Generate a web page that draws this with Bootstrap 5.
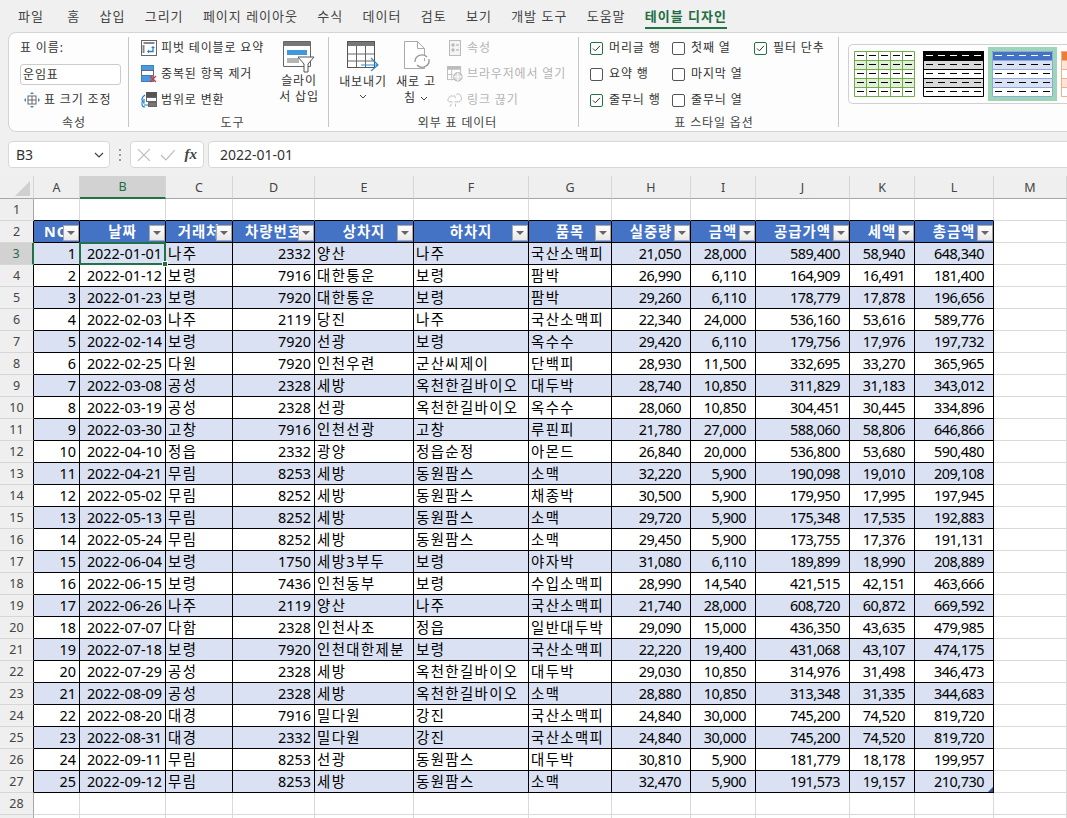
<!DOCTYPE html>
<html lang="ko">
<head>
  <meta charset="UTF-8" />
  <meta name="viewport" content="width=device-width, initial-scale=1" />
  <title>운임표 - Excel</title>
  <link href="https://cdn.jsdelivr.net/npm/bootstrap@5.3.0/dist/css/bootstrap.min.css" rel="stylesheet" />
  <style>
    body {
      margin: 0;
      height: 818px;
      overflow: hidden;
      background: #f0f0f0;
      color: #333;
      font-family: "Noto Sans", "Noto Sans CJK KR", sans-serif;
      font-size: 12px;
    }

    /* Tabs */
    .xl-tabs { height: 32px; padding-left: 18px; gap: 19.3px; font-size: 13px; letter-spacing: 1px; white-space: nowrap; }
    .xl-tabs span { line-height: 32px; color: #444; }
    .xl-tabs span:first-child { margin-right: 4px; }
    .xl-tabs .on { color: #1e6e43; font-weight: 700; position: relative; }
    .xl-tabs .on::after { content: ""; position: absolute; left: 0; right: 0; top: 27px; height: 2px; background: #217346; }

    /* Ribbon */
    .xl-ribbon {
      height: 100px;
      width: 1080px;
      margin-left: 8px;
      background: #fdfdfd;
      border: 1px solid #d4d4d4;
      border-radius: 8px;
      padding-top: 4px;
      letter-spacing: .85px;
      white-space: nowrap;
    }
    .xl-grp { height: 90px; border-right: 1px solid #c6c6c6; position: relative; flex: none; }
    .xl-grp-body { height: 78px; padding-top: 1px; }
    .xl-grp-label { height: 16px; line-height: 16px; text-align: center; color: #444; }
    .xl-g1 { width: 120px; padding-left: 11px; }
    .xl-g2 { width: 200px; padding: 0 4px 0 12px; }
    .xl-g3 { width: 250px; padding-left: 8px; }
    .xl-g4 { width: 260px; padding-left: 11px; }
    .xl-stack { display: flex; flex-direction: column; gap: 6px; }
    .xl-line { height: 20px; display: flex; align-items: center; gap: 4px; }
    .xl-off { color: #b4b4b4; }
    .xl-name { width: 101px; height: 21px; line-height: 19px; background: #fff; border: 1px solid #ccc; border-radius: 3px; padding-left: 2px; font-size: 12px; color: #333; }
    .xl-big { display: flex; flex-direction: column; align-items: center; text-align: center; line-height: 16px; padding-top: 3px; white-space: normal; }
    .xl-big svg { margin-bottom: 3px; flex: none; }
    .xl-slicer { width: 50px; }
    .xl-export { width: 52px; }
    .xl-refresh { width: 46px; }
    .xl-check { display: grid; grid-template-columns: 82px 82px 82px; row-gap: 6px; }
    .xl-check label { height: 20px; display: flex; align-items: center; gap: 6px; }
    .xl-check .form-check-input { width: 13px; height: 13px; margin: 0; border: 1px solid #555; border-radius: 2px; box-shadow: none; float: none; }
    .xl-check .form-check-input:checked {
      background-color: #fff;
      border-color: #217346;
      background-size: 9px 9px;
      background-image: url("data:image/svg+xml,%3csvg xmlns='http://www.w3.org/2000/svg' viewBox='0 0 9 9'%3e%3cpath d='M1 4.5l2.3 2.3L8 1.8' fill='none' stroke='%23333' stroke-width='1'/%3e%3c/svg%3e");
    }
    .xl-gallery { margin: 7px 0 0 9px; height: 60px; width: 240px; border: 1px solid #d0d0d0; border-right: 0; border-radius: 5px 0 0 5px; gap: 8px; padding-left: 5px; align-items: center; flex: none; }
    .xl-thumb { padding: 0; flex: none; line-height: 0; }
    .xl-thumb-on { background: #9fd5b7; padding: 4px; margin: 0 -4px; }

    /* Formula bar */
    .xl-fbar { height: 44px; padding: 9px 0 8px 8px; gap: 0; }
    .xl-box { height: 27px; background: #fff; border: 1px solid #d8d8d8; border-radius: 4px; flex: none; }
    .xl-namebox { width: 102px; padding: 0 5px 0 7px; font-size: 14px; color: #333; }
    .xl-dots { width: 20px; flex: none; }
    .xl-fx { width: 74px; gap: 9px; padding: 0 6px; }
    .xl-fx i { font-family: "Liberation Serif", serif; font-size: 15px; font-weight: 700; color: #444; }
    .xl-input { width: 880px; margin-left: 4px; padding-left: 11px; font-size: 14px; line-height: 25px; color: #333; }

    /* Sheet */
    .c-rh { width: 34px; } .c-a { width: 46px; } .c-b { width: 86px; } .c-c { width: 67px; } .c-d { width: 82px; }
    .c-e { width: 99px; } .c-f { width: 115px; } .c-g { width: 83px; } .c-h { width: 79px; } .c-i { width: 65px; }
    .c-j { width: 94px; } .c-k { width: 65px; } .c-l { width: 79px; } .c-m { width: 73px; }
    .xl-sheet.table { width: 1067px; table-layout: fixed; border-collapse: separate; border-spacing: 0; margin: 0; background: #fff; }
    .xl-sheet.table > :not(caption) > * > * {
      height: 22px;
      padding: 0 3px 0 2px;
      font-size: 14.4px;
      line-height: 21px;
      font-weight: 400;
      color: #000;
      vertical-align: middle;
      white-space: nowrap;
      overflow: hidden;
      background-color: #fff;
      box-shadow: none;
      border-width: 0 1px 1px 0;
      border-style: solid;
      border-color: #d9d9d9;
    }
    .xl-sheet.table > thead > tr > th {
      height: 22px;
      padding: 0;
      text-align: center;
      font-size: 12.5px;
      color: #444;
      background-color: #efefef;
      border-right-color: #d6d6d6;
      border-bottom-color: #a6a6a6;
    }
    .xl-sheet.table > thead > tr > th.cur { background-color: #d2d2d2; color: #1e6e43; border-bottom: 2px solid #217346; }
    .xl-sheet.table > tbody > tr > th.xl-rh {
      padding: 0;
      text-align: center;
      font-size: 12.5px;
      color: #444;
      background-color: #efefef;
      border-right-color: #a6a6a6;
      border-bottom-color: #d6d6d6;
    }
    .xl-sheet.table > tbody > tr > th.xl-rh.black { border-right-color: #000; }
    .xl-sheet.table > tbody > tr > th.xl-rh.cur { background-color: #d2d2d2; color: #1e6e43; border-right: 2px solid #217346; }
    .xl-sheet.table > tbody > tr > td.above { border-bottom-color: #000; }
    .xl-sheet.table > tbody > tr > td.cell { border-color: #000; text-align: right; }
    .xl-sheet.table > tbody > tr > td.cell.ko { text-align: left; letter-spacing: 1.4px; }
    .xl-sheet.table > tbody > tr > td.cell.acc { padding-right: 9px; letter-spacing: -.45px; }
    .xl-sheet.table > tbody > tr > td.stripe { background-color: #d9e1f2; }
    .xl-sheet.table > tbody > tr > td.head { background-color: #4472c4; color: #fff; font-weight: 700; text-align: center; letter-spacing: 1px; padding: 0; position: relative; }
    .xl-sheet.table > tbody > tr > td.pick, .xl-sheet.table > tbody > tr > td.last { position: relative; overflow: visible; }

    .xl-filter {
      position: absolute;
      right: 0;
      bottom: 1px;
      width: 16px;
      height: 16px;
      background: linear-gradient(#fff, #e8e8e8);
      border: 1px solid #a8a8a8;
      display: flex;
      align-items: center;
      justify-content: center;
    }
    .xl-filter::after { content: ""; border: 4px solid transparent; border-top: 4px solid #666; border-bottom: 0; }
    .xl-pick { position: absolute; left: -1px; top: -1px; right: -1px; bottom: -1px; border: 2px solid #217346; pointer-events: none; }
    .xl-pick::after { content: ""; position: absolute; right: -4px; bottom: -4px; background: #217346; border: 1px solid #fff; box-sizing: content-box; width: 4px; height: 4px; }
    .xl-corner { position: absolute; right: 0; bottom: 0; border-style: solid; border-width: 0 0 5px 5px; border-color: transparent transparent #2f5597 transparent; }
    .xl-tri { display: block; margin: 3px 0 0 15px; width: 0; height: 0; border-style: solid; border-width: 0 0 15px 15px; border-color: transparent transparent #d0d0d0 transparent; }
  </style>
</head>
<body>
  <!-- Tabs -->
  <div class="xl-tabs d-flex">
    <span>파일</span><span>홈</span><span>삽입</span><span>그리기</span><span>페이지 레이아웃</span><span>수식</span><span>데이터</span><span>검토</span><span>보기</span><span>개발 도구</span><span>도움말</span><span class="on">테이블 디자인</span>
  </div>

  <!-- Ribbon -->
  <div class="xl-ribbon d-flex">
    <div class="xl-grp xl-g1">
      <div class="xl-grp-body xl-stack">
        <div class="xl-line">표 이름:</div>
        <div class="xl-line"><div class="xl-name">운임표</div></div>
        <div class="xl-line ps-1">
          <svg width="16" height="16" viewBox="0 0 16 16"><rect x="4" y="4" width="8" height="8" fill="#fff" stroke="#666"/><path d="M4 8h8M8 4v8" stroke="#666"/><path d="M8 0l-2 2h4zM8 16l-2-2h4zM0 8l2-2v4zM16 8l-2-2v4z" fill="#2b8ad6"/></svg>
          <span>표 크기 조정</span>
        </div>
      </div>
      <div class="xl-grp-label">속성</div>
    </div>

    <div class="xl-grp xl-g2">
      <div class="xl-grp-body d-flex">
        <div class="xl-stack">
          <div class="xl-line">
            <svg width="16" height="16" viewBox="0 0 16 16"><rect x=".5" y=".5" width="15" height="15" fill="#fff" stroke="#666"/><path d="M2.500 3h11M2.500 5v8" stroke="#888" stroke-width="2"/><path d="M12 7v4.500H7.500" fill="none" stroke="#1f7fd0" stroke-width="1.300"/><path d="M12 6l-2 2h4zM6 11.500l2-2v4z" fill="#1f7fd0"/></svg>
            <span>피벗 테이블로 요약</span>
          </div>
          <div class="xl-line">
            <svg width="16" height="18" viewBox="0 0 16 18"><rect x=".5" y=".5" width="12" height="5" fill="#4a9adf" stroke="#3b7fbd"/><rect x=".5" y="5.500" width="12" height="5" fill="#fff" stroke="#666"/><rect x=".5" y="10.500" width="12" height="6" fill="#4a9adf" stroke="#3b7fbd"/><path d="M9 11l6 6M15 11l-6 6" stroke="#e0352b" stroke-width="1.400"/></svg>
            <span>중복된 항목 제거</span>
          </div>
          <div class="xl-line">
            <svg width="16" height="16" viewBox="0 0 16 16"><rect x="5.500" y=".5" width="10" height="5" fill="#555" stroke="#555"/><rect x="5.500" y="5.500" width="10" height="4" fill="#fff" stroke="#666"/><rect x="7.500" y="10.500" width="8" height="4" fill="#777" stroke="#666"/><path d="M4 3C1 5 0 8 2 10M3 7v4H0M4 15c-2 0-3-1-3-3M7 13H3" fill="none" stroke="#1f7fd0" stroke-width="1.200"/></svg>
            <span>범위로 변환</span>
          </div>
        </div>
        <div class="xl-big xl-slicer ms-auto">
          <svg class="mb-0" width="32" height="32" viewBox="0 0 32 32"><path d="M.5 .5h27v25H.5z" fill="#fff" stroke="#666"/><rect x="1" y="1" width="26" height="4" fill="#777"/><rect x="4" y="9" width="20" height="5" fill="#3f97dc"/><rect x="4" y="17" width="12" height="5" fill="#b5b5b5"/><path d="M15 16h16l-6 7v8h-4v-8z" fill="#fff" stroke="#555"/></svg>
          <span>슬라이 서 삽입</span>
        </div>
      </div>
      <div class="xl-grp-label">도구</div>
    </div>

    <div class="xl-grp xl-g3">
      <div class="xl-grp-body d-flex">
        <div class="xl-big xl-export">
          <svg width="32" height="30" viewBox="0 0 32 30"><rect x=".5" y=".5" width="27" height="26" fill="#fff" stroke="#555"/><rect x="1" y="1" width="26" height="4" fill="#777"/><path d="M9.500 5v21M18.500 5v21M1 13h26M1 20h26" stroke="#666"/><path d="M14 24h16M24 17l7 7-7 6" fill="none" stroke="#2b8ad6" stroke-width="1.200"/></svg>
          <span>내보내기</span>
          <svg class="mt-1" width="8" height="6" viewBox="0 0 8 6"><path d="M1 1l3 3 3-3" fill="none" stroke="#444"/></svg>
        </div>
        <div class="xl-big xl-refresh ms-1">
          <svg width="32" height="30" viewBox="0 0 32 30"><path d="M4.500 .5h13l7 7v20h-20z" fill="#fff" stroke="#aaa"/><path d="M17.500 .5v7h7" fill="none" stroke="#aaa"/><path d="M15 21a7 7 0 0 1 12-5M29 18a7 7 0 0 1-12 6" fill="#fff" stroke="#999" stroke-width="1.300"/></svg>
          <span>새로 고 침 <svg width="8" height="6" viewBox="0 0 8 6" class="m-0 d-inline align-baseline"><path d="M1 1l3 3 3-3" fill="none" stroke="#444"/></svg></span>
        </div>
        <div class="xl-stack ms-2 xl-off">
          <div class="xl-line">
            <svg width="16" height="16" viewBox="0 0 16 16"><rect x="2.500" y=".5" width="11" height="15" fill="#f4f4f4" stroke="#bbb"/><path d="M5 4h2v2H5zM5 9h2v2H5zM9 5h3M9 10h3" stroke="#aaa" fill="none"/></svg>
            <span>속성</span>
          </div>
          <div class="xl-line">
            <svg width="16" height="16" viewBox="0 0 17 17"><rect x=".5" y=".5" width="14" height="14" fill="#fff" stroke="#bbb"/><rect x="1" y="1" width="13" height="3" fill="#bbb"/><path d="M5 4v10M1 9h5" stroke="#bbb"/><circle cx="11.500" cy="11.500" r="4.500" fill="#ddd" stroke="#aaa"/><path d="M7 11.500h9M11.500 7v9" stroke="#fff"/></svg>
            <span>브라우저에서 열기</span>
          </div>
          <div class="xl-line">
            <svg width="16" height="16" viewBox="0 0 17 16"><path d="M7 4C5 3 2 4 2 6c-2 1-1 4 1 4h3M10 2c2-1 5 0 5 3 1 2 0 5-3 5H8" fill="none" stroke="#bbb"/><path d="M8 3l1 3M5 12l-2 3M9 12v3" stroke="#bbb"/></svg>
            <span>링크 끊기</span>
          </div>
        </div>
      </div>
      <div class="xl-grp-label">외부 표 데이터</div>
    </div>

    <div class="xl-grp xl-g4">
      <div class="xl-grp-body">
        <div class="xl-check">
          <label class="form-check-label"><input class="form-check-input" type="checkbox" checked />머리글 행</label>
          <label class="form-check-label"><input class="form-check-input" type="checkbox" />첫째 열</label>
          <label class="form-check-label"><input class="form-check-input" type="checkbox" checked />필터 단추</label>
          <label class="form-check-label"><input class="form-check-input" type="checkbox" />요약 행</label>
          <label class="form-check-label"><input class="form-check-input" type="checkbox" />마지막 열</label>
          <span></span>
          <label class="form-check-label"><input class="form-check-input" type="checkbox" checked />줄무늬 행</label>
          <label class="form-check-label"><input class="form-check-input" type="checkbox" />줄무늬 열</label>
        </div>
      </div>
      <div class="xl-grp-label">표 스타일 옵션</div>
    </div>

    <div class="xl-gallery d-flex overflow-hidden">
      <div class="xl-thumb">
        <svg width="61" height="46" viewBox="0 0 61 46">
          <rect width="61" height="46" fill="#fff"/>
          <path d="M0 9.500h61v9H0zM0 27.500h61v9H0z" fill="#e2efda"/>
          <path d="M.5 .5h60v45H.5zM.5 9.500h60M.5 18.500h60M.5 27.500h60M.5 36.500h60M12.500 0v46M24.500 0v46M36.500 0v46M48.500 0v46" fill="none" stroke="#70ad47"/>
          <path d="M3 4.500h55M3 13.500h55M3 22.500h55M3 31.500h55M3 40.500h55" stroke="#000" stroke-dasharray="7 5"/>
        </svg>
      </div>
      <div class="xl-thumb">
        <svg width="61" height="46" viewBox="0 0 61 46">
          <rect width="61" height="46" fill="#fff"/>
          <rect width="61" height="9.500" fill="#000"/>
          <path d="M0 9.500h61v9H0zM0 27.500h61v9H0z" fill="#d9d9d9"/>
          <path d="M.5 .5h60v45H.5zM.5 9.500h60M.5 18.500h60M.5 27.500h60M.5 36.500h60" fill="none" stroke="#000"/>
          <path d="M3 4.500h55" stroke="#fff" stroke-dasharray="7 5"/>
          <path d="M3 13.500h55M3 22.500h55M3 31.500h55M3 40.500h55" stroke="#000" stroke-dasharray="7 5"/>
        </svg>
      </div>
      <div class="xl-thumb xl-thumb-on">
        <svg width="61" height="46" viewBox="0 0 61 46">
          <rect width="61" height="46" fill="#fff"/>
          <rect width="61" height="9.500" fill="#4472c4"/>
          <path d="M0 9.500h61v9H0zM0 27.500h61v9H0z" fill="#d9e1f2"/>
          <path d="M.5 .5h60v45H.5zM.5 9.500h60M.5 18.500h60M.5 27.500h60M.5 36.500h60" fill="none" stroke="#8ea9db"/>
          <path d="M3 4.500h55" stroke="#fff" stroke-dasharray="7 5"/>
          <path d="M3 13.500h55M3 22.500h55M3 31.500h55M3 40.500h55" stroke="#000" stroke-dasharray="7 5"/>
        </svg>
      </div>
      <div class="xl-thumb">
        <svg width="61" height="46" viewBox="0 0 61 46">
          <rect width="61" height="46" fill="#fff"/>
          <rect width="61" height="9.500" fill="#ed7d31"/>
          <path d="M0 9.500h61v9H0zM0 27.500h61v9H0z" fill="#fce4d6"/>
          <path d="M.5 .5h60v45H.5zM.5 9.500h60M.5 18.500h60M.5 27.500h60M.5 36.500h60" fill="none" stroke="#f4b084"/>
        </svg>
      </div>
    </div>
  </div>

  <!-- Formula bar -->
  <div class="xl-fbar d-flex">
    <div class="xl-box xl-namebox d-flex align-items-center justify-content-between">
      <span>B3</span>
      <svg width="10" height="6" viewBox="0 0 10 6"><path d="M1 1l4 4 4-4" fill="none" stroke="#444" stroke-width="1.200"/></svg>
    </div>
    <div class="xl-dots d-flex align-items-center justify-content-center">
      <svg width="2" height="12" viewBox="0 0 2 12"><path d="M0 1h2M0 6h2M0 11h2" stroke="#999" stroke-width="2"/></svg>
    </div>
    <div class="xl-box xl-fx d-flex align-items-center">
      <svg width="14" height="14" viewBox="0 0 14 14"><path d="M1 1l12 12M13 1L1 13" stroke="#bbb" stroke-width="1.200"/></svg>
      <svg width="16" height="12" viewBox="0 0 16 12"><path d="M1 6l5 5L15 1" fill="none" stroke="#bbb" stroke-width="1.200"/></svg>
      <i>fx</i>
    </div>
    <div class="xl-box xl-input">2022-01-01</div>
  </div>

  <!-- Sheet -->
  <table class="table xl-sheet">
    <colgroup>
      <col class="c-rh" /><col class="c-a" /><col class="c-b" /><col class="c-c" /><col class="c-d" /><col class="c-e" /><col class="c-f" /><col class="c-g" /><col class="c-h" /><col class="c-i" /><col class="c-j" /><col class="c-k" /><col class="c-l" /><col class="c-m" />
    </colgroup>
    <thead>
      <tr>
        <th><span class="xl-tri"></span></th>
        <th>A</th><th class="cur">B</th><th>C</th><th>D</th><th>E</th><th>F</th><th>G</th><th>H</th><th>I</th><th>J</th><th>K</th><th>L</th><th>M</th>
      </tr>
    </thead>
    <tbody id="sheetBody"></tbody>
  </table>

  <script src="https://cdn.jsdelivr.net/npm/bootstrap@5.3.0/dist/js/bootstrap.bundle.min.js"></script>
  <script>
    const heads = ["NO", "날짜", "거래처", "차량번호", "상차지", "하차지", "품목", "실중량", "금액", "공급가액", "세액", "총금액"];
    const rows = [
      ["2022-01-01", "나주", "2332", "양산", "나주", "국산소맥피", "21,050", "28,000", "589,400", "58,940", "648,340"],
      ["2022-01-12", "보령", "7916", "대한통운", "보령", "팜박", "26,990", "6,110", "164,909", "16,491", "181,400"],
      ["2022-01-23", "보령", "7920", "대한통운", "보령", "팜박", "29,260", "6,110", "178,779", "17,878", "196,656"],
      ["2022-02-03", "나주", "2119", "당진", "나주", "국산소맥피", "22,340", "24,000", "536,160", "53,616", "589,776"],
      ["2022-02-14", "보령", "7920", "선광", "보령", "옥수수", "29,420", "6,110", "179,756", "17,976", "197,732"],
      ["2022-02-25", "다원", "7920", "인천우련", "군산씨제이", "단백피", "28,930", "11,500", "332,695", "33,270", "365,965"],
      ["2022-03-08", "공성", "2328", "세방", "옥천한길바이오", "대두박", "28,740", "10,850", "311,829", "31,183", "343,012"],
      ["2022-03-19", "공성", "2328", "선광", "옥천한길바이오", "옥수수", "28,060", "10,850", "304,451", "30,445", "334,896"],
      ["2022-03-30", "고창", "7916", "인천선광", "고창", "루핀피", "21,780", "27,000", "588,060", "58,806", "646,866"],
      ["2022-04-10", "정읍", "2332", "광양", "정읍순정", "아몬드", "26,840", "20,000", "536,800", "53,680", "590,480"],
      ["2022-04-21", "무림", "8253", "세방", "동원팜스", "소맥", "32,220", "5,900", "190,098", "19,010", "209,108"],
      ["2022-05-02", "무림", "8252", "세방", "동원팜스", "채종박", "30,500", "5,900", "179,950", "17,995", "197,945"],
      ["2022-05-13", "무림", "8252", "세방", "동원팜스", "소맥", "29,720", "5,900", "175,348", "17,535", "192,883"],
      ["2022-05-24", "무림", "8252", "세방", "동원팜스", "소맥", "29,450", "5,900", "173,755", "17,376", "191,131"],
      ["2022-06-04", "보령", "1750", "세방3부두", "보령", "야자박", "31,080", "6,110", "189,899", "18,990", "208,889"],
      ["2022-06-15", "보령", "7436", "인천동부", "보령", "수입소맥피", "28,990", "14,540", "421,515", "42,151", "463,666"],
      ["2022-06-26", "나주", "2119", "양산", "나주", "국산소맥피", "21,740", "28,000", "608,720", "60,872", "669,592"],
      ["2022-07-07", "다함", "2328", "인천사조", "정읍", "일반대두박", "29,090", "15,000", "436,350", "43,635", "479,985"],
      ["2022-07-18", "보령", "7920", "인천대한제분", "보령", "국산소맥피", "22,220", "19,400", "431,068", "43,107", "474,175"],
      ["2022-07-29", "공성", "2328", "세방", "옥천한길바이오", "대두박", "29,030", "10,850", "314,976", "31,498", "346,473"],
      ["2022-08-09", "공성", "2328", "세방", "옥천한길바이오", "소맥", "28,880", "10,850", "313,348", "31,335", "344,683"],
      ["2022-08-20", "대경", "7916", "밀다원", "강진", "국산소맥피", "24,840", "30,000", "745,200", "74,520", "819,720"],
      ["2022-08-31", "대경", "2332", "밀다원", "강진", "국산소맥피", "24,840", "30,000", "745,200", "74,520", "819,720"],
      ["2022-09-11", "무림", "8253", "선광", "동원팜스", "대두박", "30,810", "5,900", "181,779", "18,178", "199,957"],
      ["2022-09-12", "무림", "8253", "세방", "동원팜스", "소맥", "32,470", "5,900", "191,573", "19,157", "210,730"]
    ];
    const koCols = [2, 4, 5, 6]; // hangul columns are left aligned (index in the row, NO = 0)

    let html = "<tr><th class='xl-rh'>1</th>";
    for (let c = 0; c < 12; c++) html += "<td class='above'></td>";
    html += "<td></td></tr><tr><th class='xl-rh black'>2</th>";
    heads.forEach((h) => {
      html += "<td class='cell head'>" + h + "<span class='xl-filter'></span></td>";
    });
    html += "<td></td></tr>";

    rows.forEach((row, r) => {
      const cells = [String(r + 1)].concat(row);
      html += "<tr><th class='xl-rh black" + (r === 0 ? " cur" : "") + "'>" + (r + 3) + "</th>";
      cells.forEach((val, c) => {
        let cls = "cell";
        if (koCols.includes(c)) cls += " ko";
        if (c >= 7) cls += " acc";
        if (r % 2 === 0) cls += " stripe";
        let extra = "";
        if (r === 0 && c === 1) { cls += " pick"; extra = "<span class='xl-pick'></span>"; }
        if (r === rows.length - 1 && c === 11) { cls += " last"; extra = "<span class='xl-corner'></span>"; }
        html += "<td class='" + cls + "'>" + val + extra + "</td>";
      });
      html += "<td></td></tr>";
    });

    // row 28, then the blank strip the window cuts off
    html += "<tr><th class='xl-rh'>28</th>" + "<td></td>".repeat(13) + "</tr>";
    html += "<tr><th class='xl-rh'></th>" + "<td></td>".repeat(13) + "</tr>";
    document.getElementById("sheetBody").innerHTML = html;
  </script>
</body>
</html>
